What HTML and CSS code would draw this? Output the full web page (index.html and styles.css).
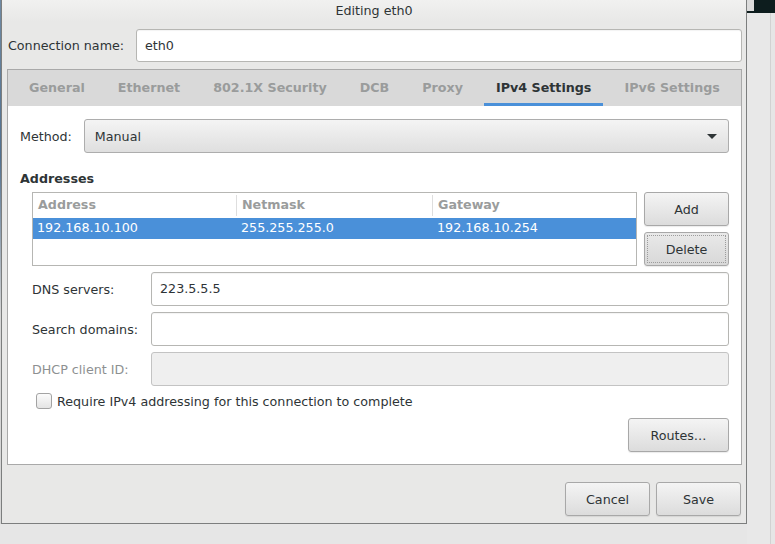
FILE: index.html
```html
<!DOCTYPE html>
<html lang="en">
<head>
  <meta charset="UTF-8" />
  <title>Editing eth0</title>
  <link rel="stylesheet" href="styles.css">
</head>
<body>
  <div class="screen">
    <div class="desk-edge"></div>

    <div class="dialog">
      <div class="titlebar">Editing eth0</div>

      <div class="conn-row">
        <span class="conn-label">Connection name:</span>
        <div class="entry conn-entry">eth0</div>
      </div>

      <div class="notebook">
        <div class="tabs">
          <span class="tab">General</span>
          <span class="tab">Ethernet</span>
          <span class="tab">802.1X Security</span>
          <span class="tab">DCB</span>
          <span class="tab">Proxy</span>
          <span class="tab active">IPv4 Settings</span>
          <span class="tab">IPv6 Settings</span>
        </div>

        <div class="page">
          <div class="method-row">
            <span class="method-label">Method:</span>
            <div class="combo">
              <span>Manual</span>
              <span class="arrow"></span>
            </div>
          </div>

          <h3 class="section-title">Addresses</h3>

          <div class="addr-block">
            <div class="addr-table">
              <div class="addr-head">
                <span class="col">Address</span>
                <span class="col">Netmask</span>
                <span class="col">Gateway</span>
              </div>
              <div class="addr-row selected">
                <span class="col">192.168.10.100</span>
                <span class="col">255.255.255.0</span>
                <span class="col">192.168.10.254</span>
              </div>
            </div>
            <div class="addr-buttons">
              <button class="btn">Add</button>
              <button class="btn focused">Delete</button>
            </div>
          </div>

          <div class="fields">
            <div class="field">
              <span class="field-label">DNS servers:</span>
              <div class="entry">223.5.5.5</div>
            </div>
            <div class="field">
              <span class="field-label">Search domains:</span>
              <div class="entry"></div>
            </div>
            <div class="field disabled">
              <span class="field-label">DHCP client ID:</span>
              <div class="entry"></div>
            </div>
          </div>

          <label class="check-row">
            <span class="checkbox"></span>
            Require IPv4 addressing for this connection to complete
          </label>

          <div class="routes-row">
            <button class="btn routes-btn">Routes…</button>
          </div>
        </div>
      </div>

      <div class="actions">
        <button class="btn">Cancel</button>
        <button class="btn">Save</button>
      </div>
    </div>

    <div class="side">
      <div class="side-top"><span class="side-corner"></span></div>
      <div class="side-rest"></div>
    </div>
  </div>
</body>
</html>
```

FILE: styles.css
```css
* {
  box-sizing: border-box;
}

body {
  margin: 0;
  font-family: "DejaVu Sans", sans-serif;
  font-size: 12.7px;
  color: #2e3436;
  background: #e6e6e6;
}

.screen {
  display: flex;
  width: 775px;
  height: 544px;
  overflow: hidden;
}

.desk-edge {
  width: 1px;
  height: 524px;
  background: linear-gradient(#6f8aa4, #51708f 30%, #d6d6d6 60%);
}

.dialog {
  width: 746px;
  height: 524px;
  display: flex;
  flex-direction: column;
  background: #e8e8e7;
  border: 1px solid #7c7e7e;
  border-top: none;
  white-space: nowrap;
}

.titlebar {
  height: 22px;
  line-height: 22px;
  text-align: center;
  background: linear-gradient(#f1f1f0, #e8e8e7);
}

.conn-row {
  display: flex;
  align-items: center;
  gap: 12px;
  margin: 7px 4px 0 6px;
}

.conn-label {
  width: 116px;
}

.entry {
  height: 33px;
  line-height: 31px;
  padding: 0 8px;
  background: #fff;
  border: 1px solid #b6b6b3;
  border-radius: 3px;
  box-shadow: inset 0 1px 1px rgba(0,0,0,0.05);
}

.conn-entry {
  flex: 1;
}

.notebook {
  margin: 7px 4px 0 5px;
  border: 1px solid #a9a9a9;
  background: #fff;
}

.tabs {
  display: flex;
  gap: 9px;
  height: 36px;
  padding-left: 9px;
  background: #d9d9d9;
}

.tab {
  padding: 2px 12px 0 12px;
  line-height: 31px;
  font-weight: bold;
  color: #9a9c9c;
  border-bottom: 3px solid transparent;
}

.tab.active {
  color: #2e3436;
  border-bottom-color: #4a90d9;
}

.page {
  height: 358px;
  padding: 13px 12px 12px 12px;
}

.method-row {
  display: flex;
  align-items: center;
  gap: 12px;
}

.combo {
  flex: 1;
  display: flex;
  align-items: center;
  justify-content: space-between;
  height: 34px;
  padding: 0 11px 0 10px;
  border: 1px solid #adadad;
  border-radius: 3px;
  background: linear-gradient(#f4f4f4, #dfdfdf);
}

.arrow {
  width: 0;
  height: 0;
  border-left: 5px solid transparent;
  border-right: 5px solid transparent;
  border-top: 5px solid #2e3436;
}

.section-title {
  margin: 18px 0 5px 0;
  height: 16px;
  line-height: 16px;
  font-size: 12.7px;
  font-weight: bold;
}

.addr-block {
  display: flex;
  gap: 7px;
  margin-left: 12px;
}

.addr-table {
  flex: 1;
  height: 74px;
  border: 1px solid #b6b6b3;
  background: #fff;
}

.addr-head,
.addr-row {
  display: grid;
  grid-template-columns: 204px 196px 1fr;
}

.addr-head {
  height: 25px;
  font-weight: bold;
  color: #9a9c9c;
}

.addr-head .col {
  padding-left: 5px;
  border-right: 1px solid #dedede;
  margin: 2px 0;
  line-height: 20px;
}

.addr-head .col:last-child {
  border-right: none;
}

.addr-row {
  height: 21px;
  line-height: 20px;
}

.addr-row .col {
  padding-left: 4px;
}

.addr-row.selected {
  background: #4a90d9;
  color: #fff;
}

.addr-buttons {
  display: flex;
  flex-direction: column;
  gap: 6px;
  width: 85px;
}

.btn {
  height: 34px;
  font-family: inherit;
  font-size: 12.7px;
  color: #2e3436;
  border: 1px solid #a8a8a8;
  border-radius: 3px;
  background: linear-gradient(#f4f4f4, #dcdcdc);
  box-shadow: 0 1px 1px rgba(0,0,0,0.08);
  padding: 0;
}

.btn.focused {
  background: linear-gradient(#e9e9e9, #d8d8d8);
  outline: 1px dotted #9c9c9c;
  outline-offset: -4px;
}

.fields {
  display: flex;
  flex-direction: column;
  gap: 6px;
  margin: 6px 0 0 12px;
}

.field {
  display: flex;
  align-items: center;
  gap: 12px;
}

.field-label {
  width: 107px;
}

.field .entry {
  flex: 1;
  height: 34px;
  line-height: 32px;
}

.field.disabled .field-label {
  color: #8d9091;
}

.field.disabled .entry {
  background: #efefef;
  border-color: #c3c3c3;
  box-shadow: none;
}

.check-row {
  display: flex;
  align-items: center;
  gap: 5px;
  height: 18px;
  margin: 6px 0 0 16px;
}

.checkbox {
  width: 16px;
  height: 16px;
  border: 1px solid #a3a3a3;
  border-radius: 3px;
  background: linear-gradient(#fbfbfb, #e4e4e4);
}

.routes-row {
  display: flex;
  justify-content: flex-end;
  margin-top: 8px;
}

.routes-btn {
  width: 101px;
}

.actions {
  display: flex;
  justify-content: flex-end;
  gap: 6px;
  margin: 17px 5px 0 0;
}

.actions .btn {
  width: 85px;
}

.side {
  width: 28px;
  display: flex;
  flex-direction: column;
}

.side-top {
  height: 13px;
  background: #0d1d1e;
}

.side-corner {
  display: block;
  width: 7px;
  height: 11px;
  background: #dcdcdc;
}

.side-rest {
  flex: 1;
  background: #e8e8e8;
  border-right: 1px solid #d2d2d2;
  margin-right: 4px;
}
```
